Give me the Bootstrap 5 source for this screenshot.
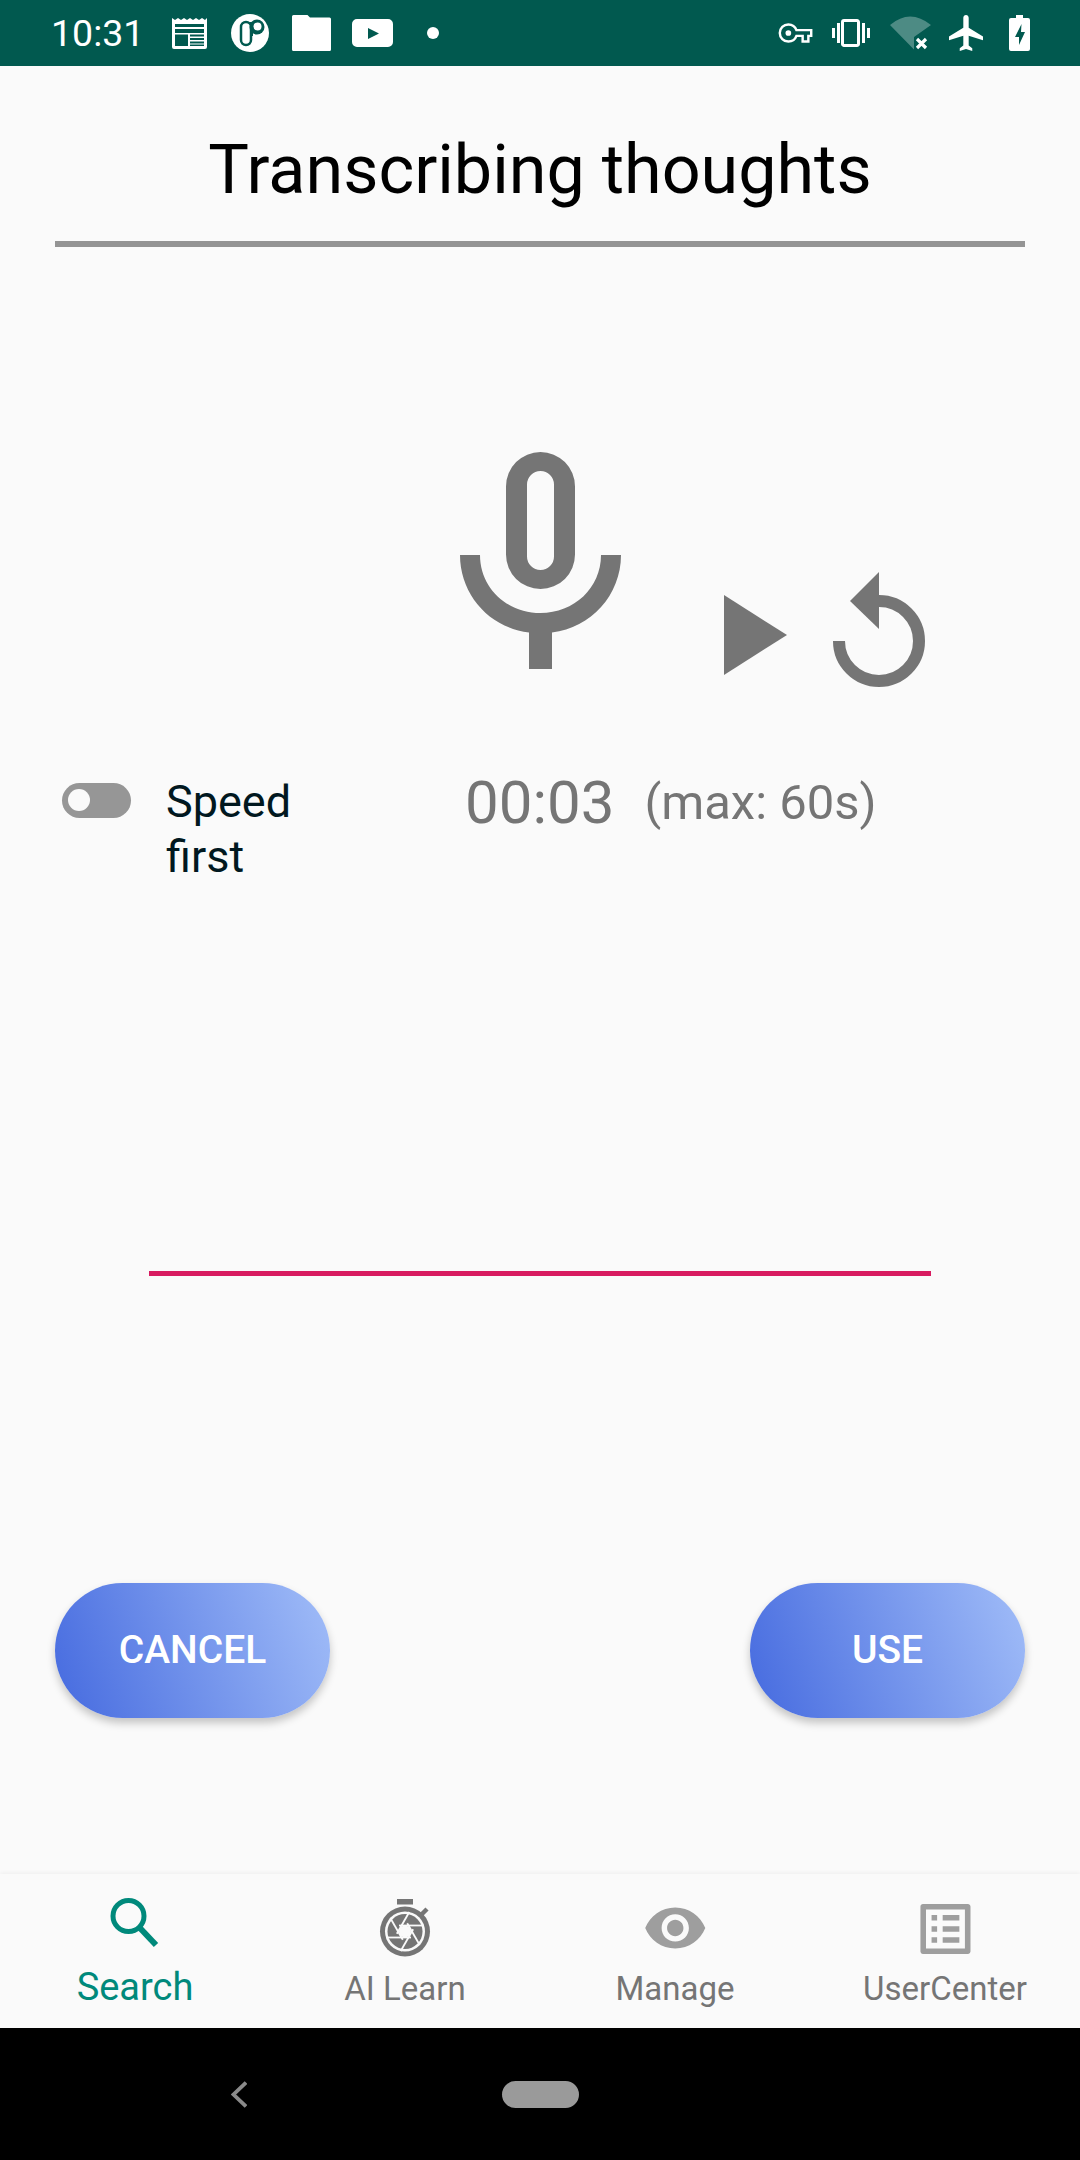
<!doctype html>
<html lang="en">
<head>
<meta charset="utf-8">
<title>Transcribing thoughts</title>
<link rel="stylesheet" href="https://cdn.jsdelivr.net/npm/bootstrap@5.3.0/dist/css/bootstrap.min.css">
<style>
html,body{height:2160px;margin:0}
body{background:#fafafa;font-family:Roboto,"Liberation Sans",sans-serif;width:1080px;overflow:hidden}
.screen{height:2160px}
svg{display:block;flex:none}
.sbar{height:66px;background:#01594f;color:#fff;padding:0 50px 0 51px}
.sbar-time{font-size:37.5px;line-height:66px;width:121px}
.gap-a{margin-left:24px}.gap-b{margin-left:23px}.gap-c{margin-left:21px}.gap-d{margin-left:34px}
.gap-e{margin-left:19px}.gap-f{margin-left:20px}.gap-g{margin-left:18px}.gap-h{margin-left:26px}
.title-text{font-size:68.25px;line-height:80px;color:#000;padding-top:64px}
.title-rule{height:6px;background:#949494;margin:31px 55px 0}
.mic-zone{height:521px;padding:205px 0 0 460px}
.play-ico{margin:143px 0 0 103px}
.replay-ico{margin:120px 0 0 46px}
.mid-row{height:503px;padding-left:62px}
.tswitch{width:69px;height:35px;border-radius:18px;background:#969696;margin-top:15px;padding:6px 0 0 6px}
.tknob{width:22px;height:22px;border-radius:50%;background:#fafafa}
.speedlabel{font-size:45px;line-height:55px;color:#01181f;width:180px;margin:6px 0 0 35px}
.clock{font-size:60px;line-height:70px;color:#757575;margin-left:119px}
.maxlabel{font-size:49px;line-height:70px;color:#757575;margin-left:30px}
.redline{height:5px;background:#d81b60;margin:0 149px}
.btnrow{margin-top:307px;padding:0 55px}
.actionbtn{width:275px;height:135px;border:0;border-radius:68px;background:linear-gradient(70deg,#456adf 0%,#a1bdf8 100%);color:#fff;font-size:39px;font-weight:500;box-shadow:0 5px 9px rgba(0,0,0,.22);padding:0}
.actionbtn:hover{color:#fff}
.bnav{height:154px;background:#fafafa;box-shadow:0 -1px 4px rgba(0,0,0,.05)}
.bitem{width:270px}
.blabel{font-size:33px;line-height:40px;color:#757575;margin-top:4px}
.blabel-on{font-size:38px;line-height:44px;color:#00897b;margin-top:0}
.sysbar{height:132px;background:#000;padding-top:53px}
.pill{width:77px;height:27px;border-radius:14px;background:#9a9a9a;margin-left:255px}
.chev{margin-left:231px}
</style>
</head>
<body>
<div class="screen d-flex flex-column">
  <div class="sbar d-flex align-items-center">
    <div class="sbar-time">10:31</div>
    <svg width="35" height="31" viewBox="0 0 35 31"><path fill="#fff" fill-rule="evenodd" d="M0 0l3 2 3-2 3 2 3-2 3 2 3-2 3 2 3-2 3 2 3-2 3 2 2-2v29a2 2 0 0 1-2 2H2a2 2 0 0 1-2-2zM3 6v3h29V6zM3 11v4h29v-4zM3 16.500V28h13V16.500zM18 16.500v2h14v-2zM18 20v2h14v-2zM18 23.500v2h14v-2zM18 26.500V28h14v-1.500z"/></svg>
    <svg class="gap-a" width="38" height="38" viewBox="0 0 38 38"><circle cx="19" cy="19" r="19" fill="#fff"/><rect x="10" y="8" width="10" height="23" rx="5" fill="none" stroke="#01594f" stroke-width="2.500"/><circle cx="26" cy="13" r="7.500" fill="#01594f"/><path d="M19 8h3v14h-3z" fill="#01594f"/><circle cx="26.500" cy="12.500" r="4" fill="#fff"/></svg>
    <svg class="gap-b" width="39" height="36" viewBox="0 0 39 36"><path fill="#fff" d="M0 1.500A1.500 1.500 0 0 1 1.500 0h14l2.500 2.500h19.500A1.500 1.500 0 0 1 39 4v30.500a1.500 1.500 0 0 1-1.500 1.500h-36A1.500 1.500 0 0 1 0 34.500z"/></svg>
    <svg class="gap-c" width="41" height="28" viewBox="0 0 41 28"><path fill="#fff" fill-rule="evenodd" d="M5 0h31a5 5 0 0 1 5 5v18a5 5 0 0 1-5 5H5a5 5 0 0 1-5-5V5a5 5 0 0 1 5-5zM16 9v11l11-5.500z"/></svg>
    <svg class="gap-d" width="12" height="12" viewBox="0 0 12 12"><circle cx="6" cy="6" r="6" fill="#fff"/></svg>
    <svg class="ms-auto" width="35" height="20" viewBox="0 5 24 14"><path fill="none" stroke="#fff" stroke-width="1.700" d="M12.650 10C11.830 7.670 9.610 6 7 6c-3.310 0-6 2.690-6 6s2.690 6 6 6c2.610 0 4.830-1.670 5.650-4H17v4h4v-4h2v-4z"/><circle cx="7" cy="12" r="2" fill="#fff"/></svg>
    <svg class="gap-e" width="38" height="28" viewBox="0 0 38 28"><path fill="none" stroke="#fff" stroke-width="3" d="M12 1.500h13a1.500 1.500 0 0 1 1.500 1.500v22a1.500 1.500 0 0 1-1.500 1.500H12a1.500 1.500 0 0 1-1.500-1.500V3A1.500 1.500 0 0 1 12 1.500z"/><path fill="#fff" d="M5 4h3v20H5zM30 4h3v20h-3zM0 9h3v10H0zM35 9h3v10h-3z"/></svg>
    <svg class="gap-f" width="41" height="34" viewBox="0 0 41 34"><path fill="#fff" fill-opacity=".3" d="M0 9Q20-8 41 9L24 21v12.500L23.500 33z"/><path fill="none" stroke="#fff" stroke-width="3.200" d="M27 23l9 9M36 23l-9 9"/></svg>
    <svg class="gap-g" width="34" height="36" viewBox="2 2 19 20"><path fill="#fff" d="M21 16v-2l-8-5V3.500c0-.830-.670-1.500-1.500-1.500S10 2.670 10 3.500V9l-8 5v2l8-2.500V19l-2 1.500V22l3.500-1 3.500 1v-1.500L13 19v-5.500z"/></svg>
    <svg class="gap-h" width="21" height="36" viewBox="0 0 21 36"><path fill="#fff" fill-rule="evenodd" d="M7 0h7v3h5a2 2 0 0 1 2 2v29a2 2 0 0 1-2 2H2a2 2 0 0 1-2-2V5a2 2 0 0 1 2-2h5zM12.500 9L6 22h4v8l6-13h-4z"/></svg>
  </div>

  <div class="text-center title-text">Transcribing thoughts</div>
  <div class="title-rule"></div>

  <div class="mic-zone d-flex align-items-start">
    <svg width="161" height="217" viewBox="0 0 161 217" fill="#757575">
      <path fill-rule="evenodd" d="M80.500 0A34.500 34.500 0 0 1 115 34.500v68a34.500 34.500 0 0 1-69 0v-68A34.500 34.500 0 0 1 80.500 0zM80.500 19A13.500 13.500 0 0 0 67 32.500v72a13.500 13.500 0 0 0 27 0v-72A13.500 13.500 0 0 0 80.500 19z"/>
      <path d="M0 103h20c0 33 27 58 60.500 58S141 136 141 103h20c0 40-30 73-69 77.500V217H69v-36.500C30 176 0 143 0 103z"/>
    </svg>
    <svg class="play-ico" width="63" height="80" viewBox="0 0 63 80" fill="#757575"><path d="M0 0l63 40L0 80z"/></svg>
    <svg class="replay-ico" width="92" height="115" viewBox="0 0 92 115" fill="#757575">
      <path fill="none" stroke="#757575" stroke-width="12" d="M6 69a40 40 0 1 0 40-40"/>
      <path d="M17 29L46 0v57z"/>
    </svg>
  </div>

  <div class="mid-row d-flex align-items-start">
    <div class="tswitch"><div class="tknob"></div></div>
    <div class="speedlabel">Speed first</div>
    <div class="clock">00:03</div>
    <div class="maxlabel">(max: 60s)</div>
  </div>

  <div class="redline"></div>

  <div class="btnrow d-flex justify-content-between">
    <button type="button" class="btn actionbtn">CANCEL</button>
    <button type="button" class="btn actionbtn">USE</button>
  </div>

  <div class="flex-grow-1"></div>

  <div class="bnav d-flex">
    <div class="bitem d-flex flex-column align-items-center">
      <svg width="70" height="91" viewBox="0 0 70 91"><circle cx="28.500" cy="42" r="15.500" fill="none" stroke="#00897b" stroke-width="5"/><path d="M39 53l17 18" stroke="#00897b" stroke-width="6" fill="none"/></svg>
      <div class="blabel blabel-on">Search</div>
    </div>
    <div class="bitem d-flex flex-column align-items-center">
      <svg width="70" height="91" viewBox="0 0 70 91">
        <circle cx="35" cy="57.500" r="25" fill="#757575"/>
        <circle cx="35" cy="57.500" r="20" fill="#fafafa"/>
        <circle cx="35" cy="57.500" r="17.500" fill="#757575"/>
        <path fill="#757575" d="M27 25h16v5.500H27z"/>
        <path stroke="#757575" stroke-width="4.500" d="M51 41l6-6"/>
        <g stroke="#fafafa" stroke-width="1.800">
          <path d="M29 51.500H54"/>
          <path d="M29 51.500H54" transform="rotate(60 35 57.500)"/>
          <path d="M29 51.500H54" transform="rotate(120 35 57.500)"/>
          <path d="M29 51.500H54" transform="rotate(180 35 57.500)"/>
          <path d="M29 51.500H54" transform="rotate(240 35 57.500)"/>
          <path d="M29 51.500H54" transform="rotate(300 35 57.500)"/>
        </g>
        <circle cx="35" cy="57.500" r="6" fill="#fafafa"/>
      </svg>
      <div class="blabel">AI Learn</div>
    </div>
    <div class="bitem d-flex flex-column align-items-center">
      <svg width="66" height="91" viewBox="0 0 66 91"><g transform="translate(0.500,21.200) scale(2.730)"><path fill="#9e9e9e" fill-rule="evenodd" d="M12 4.500C7 4.500 2.730 7.610 1 12c1.730 4.390 6 7.500 11 7.500s9.270-3.110 11-7.500c-1.730-4.390-6-7.500-11-7.500zM12 17c-2.760 0-5-2.240-5-5s2.240-5 5-5 5 2.240 5 5-2.240 5-5 5zM12 9c-1.660 0-3 1.340-3 3s1.340 3 3 3 3-1.340 3-3-1.340-3-3-3z"/></g></svg>
      <div class="blabel">Manage</div>
    </div>
    <div class="bitem d-flex flex-column align-items-center">
      <svg width="67" height="91" viewBox="0 0 67 91"><g transform="translate(0.100,21.600) scale(2.780)"><path fill="#9e9e9e" fill-rule="evenodd" d="M19 5v14H5V5zM20.100 3H3.900c-.5 0-.9.4-.9.9v16.200c0 .4.400.9.900.9h16.200c.4 0 .9-.5.900-.9V3.900c0-.5-.5-.9-.9-.9zM11 7h6v2h-6zM11 11h6v2h-6zM11 15h6v2h-6zM7 7h2v2H7zM7 11h2v2H7zM7 15h2v2H7z"/></g></svg>
      <div class="blabel">UserCenter</div>
    </div>
  </div>
  <div class="sysbar d-flex align-items-start">
    <svg class="chev" width="16" height="27" viewBox="0 0 16 27"><path fill="none" stroke="#8a8a8a" stroke-width="3.800" d="M15 1.500L2.500 13.500 15 25.500"/></svg>
    <div class="pill"></div>
  </div>
</div>
</body>
</html>
